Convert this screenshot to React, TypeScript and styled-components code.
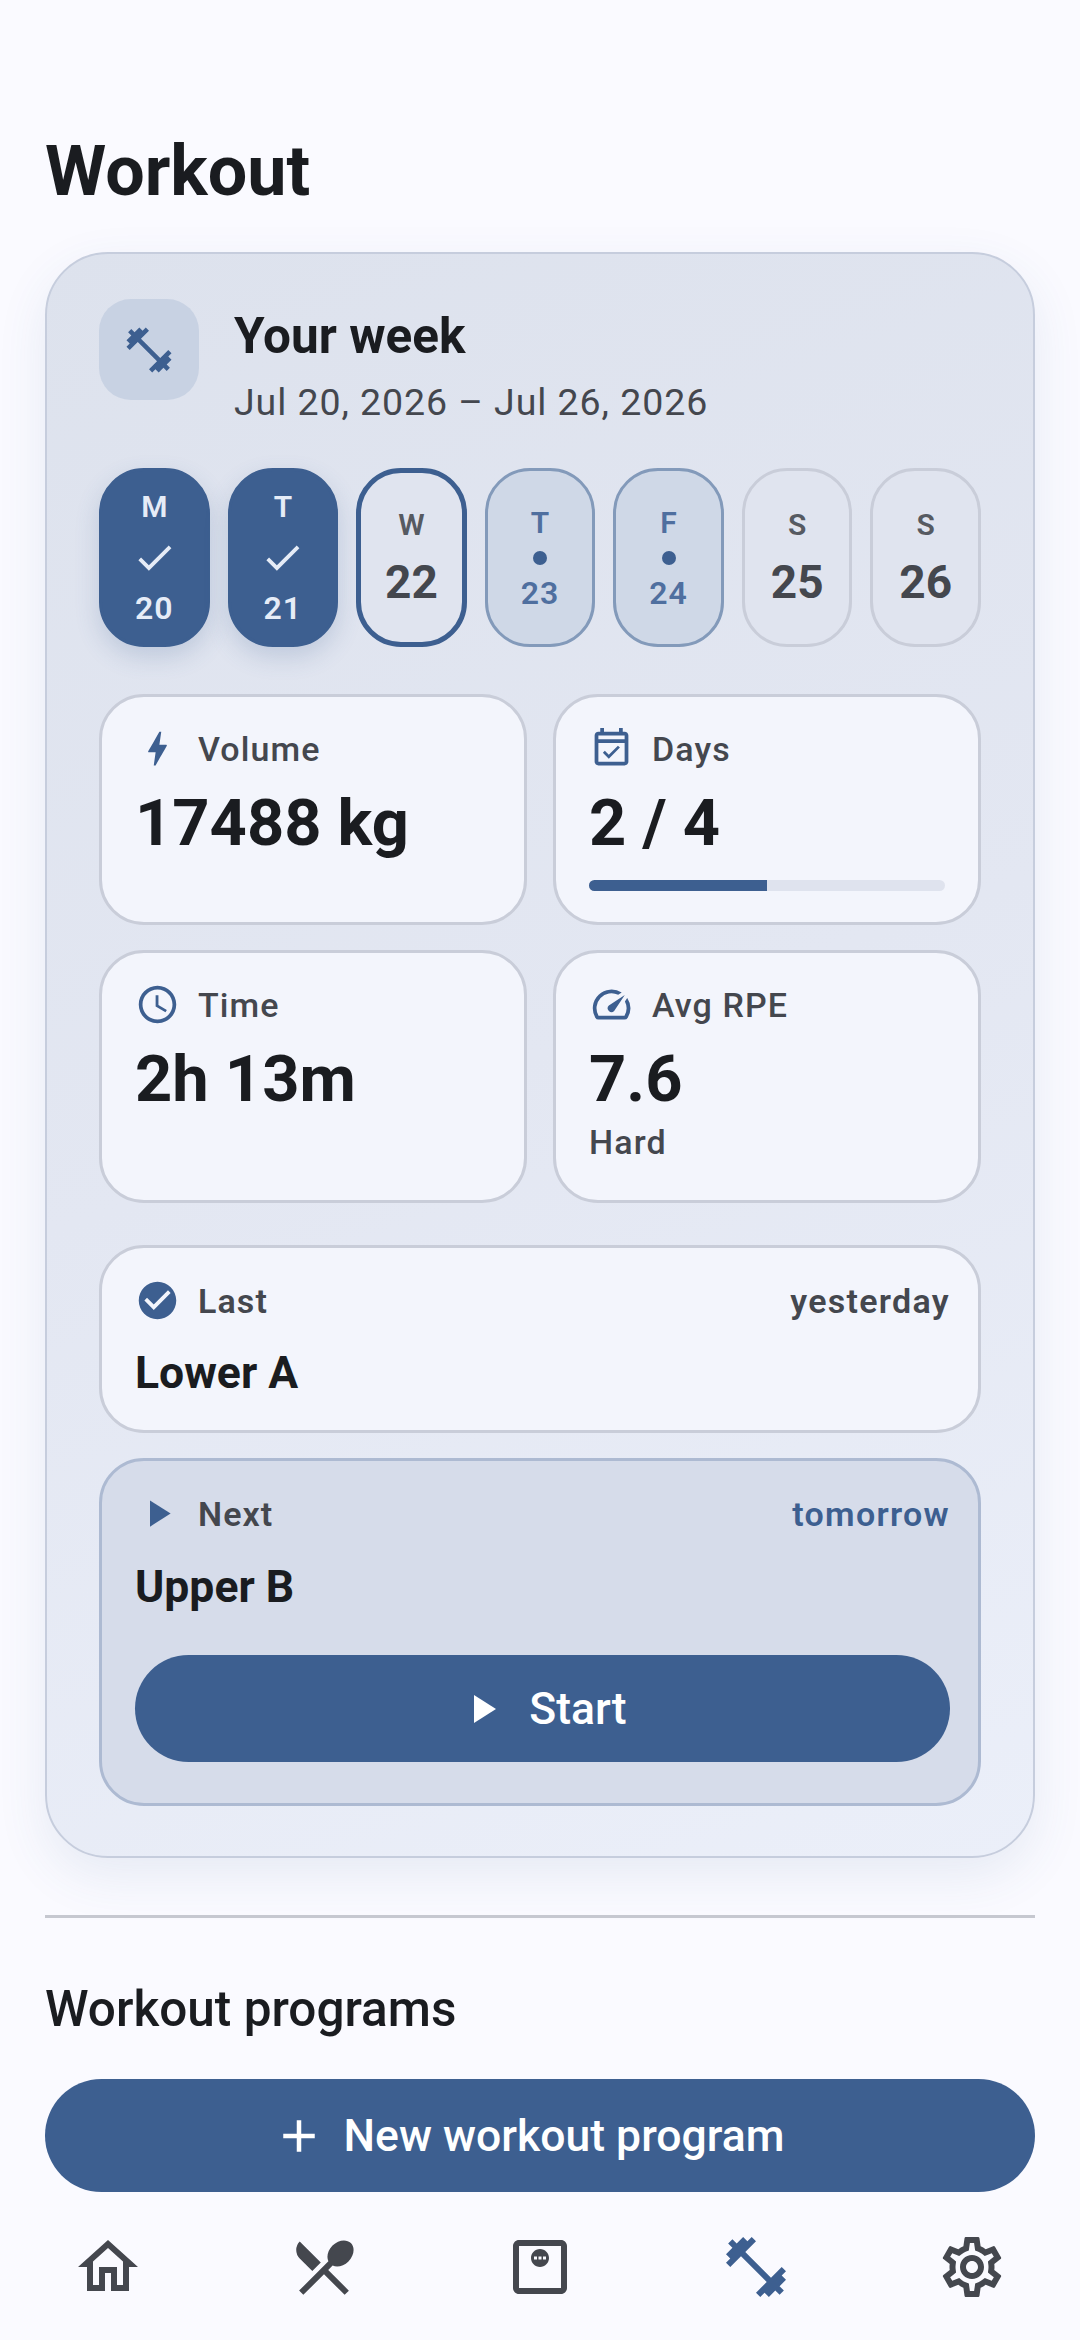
import { ReactNode } from "react";
import styled, { createGlobalStyle } from "styled-components";
import {
  MdAdd,
  MdBolt,
  MdCheck,
  MdCheckCircle,
  MdFitnessCenter,
  MdOutlineEventAvailable,
  MdOutlineHome,
  MdOutlineMonitorWeight,
  MdOutlineSchedule,
  MdOutlineSettings,
  MdOutlineSpeed,
  MdPlayArrow,
  MdRestaurantMenu,
} from "react-icons/md";

const primary = "#3d5f90";
const ink = "#1a1c20";
const muted = "#44474e";

const GlobalStyle = createGlobalStyle`
  html, body {
    margin: 0;
    background: #fafaff;
  }
  * {
    box-sizing: border-box;
  }
  body {
    font-family: Roboto, "Noto Sans", sans-serif;
    color: ${ink};
  }
`;

const Screen = styled.div`
  width: 1080px;
  height: 2340px;
  display: flex;
  flex-direction: column;
  overflow: hidden;
  background: #fafaff;
`;

const Content = styled.main`
  flex: 1;
  min-height: 0;
  overflow: hidden;
  padding: 130px 45px 0;
`;

const PageTitle = styled.h1`
  margin: 0 0 40px;
  font-size: 70px;
  line-height: 82px;
  font-weight: 700;
`;

const WeekCard = styled.section`
  border: 2px solid #c6cddd;
  border-radius: 63px;
  padding: 45px 52px 50px;
  background: linear-gradient(160deg, #dde2ed 0%, #e3e7f2 50%, #ebeff9 100%);
  box-shadow: 0 18px 50px rgba(61, 95, 144, 0.1);
`;

const WeekHeader = styled.header`
  display: flex;
  align-items: flex-start;
  gap: 35px;
  margin-bottom: 43px;
`;

const WeekBadge = styled.div`
  width: 100px;
  height: 101px;
  flex: none;
  display: flex;
  align-items: center;
  justify-content: center;
  border-radius: 32px;
  background: #c8d2e3;
  color: ${primary};
`;

const WeekText = styled.div`
  padding-top: 10px;
`;

const WeekTitle = styled.h2`
  margin: 0 0 16px;
  font-size: 49.5px;
  line-height: 54px;
  font-weight: 700;
`;

const WeekRange = styled.div`
  font-size: 37.5px;
  line-height: 46px;
  letter-spacing: 0.93px;
  color: ${muted};
`;

const DayStrip = styled.div`
  display: grid;
  grid-template-columns: repeat(7, 1fr);
  gap: 18px;
  margin-bottom: 47px;
`;

type DayState = "done" | "today" | "planned" | "rest";

const DayCell = styled.div<{ $state: DayState }>`
  height: 179px;
  display: flex;
  flex-direction: column;
  align-items: center;
  justify-content: center;
  gap: ${(p) => (p.$state === "today" || p.$state === "rest" ? "13px" : "10px")};
  border-radius: 45px;
  border: ${(p) =>
    p.$state === "done"
      ? `3px solid ${primary}`
      : p.$state === "today"
        ? `5px solid ${primary}`
        : p.$state === "planned"
          ? "3px solid #839ABA"
          : "3px solid #c9cdd9"};
  background: ${(p) =>
    p.$state === "done" ? primary : p.$state === "planned" ? "#cfd8e7" : "#e0e4ef"};
  color: ${(p) =>
    p.$state === "done" ? "#e6ecf7" : p.$state === "planned" ? "#4f6f9f" : "#44474e"};
  box-shadow: ${(p) => (p.$state === "done" ? "0 10px 24px rgba(61, 95, 144, 0.2)" : "none")};
`;

const DayLetter = styled.span<{ $soft?: boolean }>`
  font-size: 30px;
  line-height: 36px;
  font-weight: 600;
  opacity: ${(p) => (p.$soft ? 0.88 : 1)};
`;

const DayNumber = styled.span<{ $large?: boolean }>`
  font-size: ${(p) => (p.$large ? "46px" : "32px")};
  line-height: ${(p) => (p.$large ? "52px" : "36px")};
  font-weight: ${(p) => (p.$large ? 700 : 600)};
  letter-spacing: ${(p) => (p.$large ? "0" : "1px")};
`;

const DayDot = styled.span`
  width: 14px;
  height: 14px;
  border-radius: 50%;
  background: ${primary};
`;

const StatGrid = styled.div`
  display: grid;
  grid-template-columns: 1fr 1fr;
  gap: 25px 26px;
  margin-bottom: 42px;
`;

const StatCard = styled.article`
  border: 3px solid #c9cdd9;
  border-radius: 45px;
  padding: 29px 33px 31px;
  background: #f3f5fc;
`;

const RowHead = styled.div`
  display: flex;
  align-items: center;
  gap: 18px;
  height: 45px;
  color: ${primary};
`;

const RowLabel = styled.span<{ $strong?: boolean }>`
  font-size: 34px;
  line-height: 40px;
  font-weight: ${(p) => (p.$strong ? 600 : 500)};
  letter-spacing: 1.1px;
  color: ${muted};
`;

const StatValue = styled.div`
  margin-top: 14px;
  font-size: 65px;
  line-height: 76px;
  font-weight: 700;
  color: ${ink};
`;

const StatNote = styled.div`
  margin-top: 5px;
  padding-bottom: 7px;
  font-size: 34px;
  line-height: 40px;
  letter-spacing: 1.1px;
  font-weight: 500;
  color: ${muted};
`;

const Track = styled.div`
  height: 11px;
  margin-top: 19px;
  border-radius: 6px;
  overflow: hidden;
  background: #dfe3ee;
`;

const TrackFill = styled.div`
  height: 100%;
  background: ${primary};
`;

const SessionCard = styled.article<{ $next?: boolean }>`
  border: 3px solid ${(p) => (p.$next ? "#adbad2" : "#c9cdd9")};
  border-radius: 45px;
  padding: 30px 28px ${(p) => (p.$next ? "41px" : "32px")} 33px;
  margin-bottom: ${(p) => (p.$next ? "0" : "25px")};
  background: ${(p) => (p.$next ? "#d6dcea" : "#f3f5fc")};
`;

const SessionTop = styled.div`
  display: flex;
  align-items: center;
  justify-content: space-between;
`;

const SessionWhen = styled.span<{ $accent?: boolean }>`
  font-size: 34px;
  line-height: 40px;
  font-weight: 600;
  letter-spacing: 1.3px;
  color: ${(p) => (p.$accent ? primary : muted)};
`;

const SessionName = styled.div<{ $next?: boolean }>`
  margin-top: ${(p) => (p.$next ? "26px" : "25px")};
  margin-bottom: ${(p) => (p.$next ? "43px" : "0")};
  font-size: 44.5px;
  line-height: 50px;
  font-weight: 700;
`;

const StartButton = styled.button`
  width: 100%;
  height: 107px;
  display: flex;
  align-items: center;
  justify-content: center;
  gap: 23px;
  border: none;
  border-radius: 60px;
  padding: 0;
  background: ${primary};
  color: #fff;
  font-family: inherit;
  font-size: 44.5px;
  font-weight: 500;
`;

const NewProgramButton = styled(StartButton)`
  height: 113px;
  gap: 18px;
  padding-right: 24px;
`;

const Divider = styled.hr`
  margin: 57px 0 62px;
  height: 3px;
  border: none;
  background: #c6c8d0;
`;

const SectionTitle = styled.h2`
  margin: 0 0 41px;
  font-size: 49.5px;
  line-height: 58px;
  font-weight: 500;
`;

const BottomNav = styled.nav`
  flex: none;
  height: 145px;
  display: grid;
  grid-template-columns: repeat(5, 1fr);
  padding-top: 36px;
  background: #fafaff;
`;

const NavItem = styled.div<{ $active?: boolean }>`
  display: flex;
  justify-content: center;
  color: ${(p) => (p.$active ? primary : muted)};
`;

const days: { letter: string; num: number; state: DayState }[] = [
  { letter: "M", num: 20, state: "done" },
  { letter: "T", num: 21, state: "done" },
  { letter: "W", num: 22, state: "today" },
  { letter: "T", num: 23, state: "planned" },
  { letter: "F", num: 24, state: "planned" },
  { letter: "S", num: 25, state: "rest" },
  { letter: "S", num: 26, state: "rest" },
];

function Day({ letter, num, state }: { letter: string; num: number; state: DayState }) {
  const large = state === "today" || state === "rest";
  return (
    <DayCell $state={state}>
      <DayLetter $soft={large}>{letter}</DayLetter>
      {state === "done" && <MdCheck size={45} />}
      {state === "planned" && <DayDot />}
      <DayNumber $large={large}>{num}</DayNumber>
    </DayCell>
  );
}

function Head({ icon, label, strong }: { icon: ReactNode; label: string; strong?: boolean }) {
  return (
    <RowHead>
      {icon}
      <RowLabel $strong={strong}>{label}</RowLabel>
    </RowHead>
  );
}

export default function App() {
  return (
    <Screen>
      <GlobalStyle />
      <Content>
        <PageTitle>Workout</PageTitle>
        <WeekCard>
          <WeekHeader>
            <WeekBadge>
              <MdFitnessCenter size={54} />
            </WeekBadge>
            <WeekText>
              <WeekTitle>Your week</WeekTitle>
              <WeekRange>Jul 20, 2026 – Jul 26, 2026</WeekRange>
            </WeekText>
          </WeekHeader>

          <DayStrip>
            {days.map((d) => (
              <Day key={d.num} {...d} />
            ))}
          </DayStrip>

          <StatGrid>
            <StatCard>
              <Head icon={<MdBolt size={45} />} label="Volume" />
              <StatValue>17488 kg</StatValue>
            </StatCard>
            <StatCard>
              <Head icon={<MdOutlineEventAvailable size={45} />} label="Days" />
              <StatValue>2 / 4</StatValue>
              <Track>
                <TrackFill style={{ width: `${(2 / 4) * 100}%` }} />
              </Track>
            </StatCard>
            <StatCard>
              <Head icon={<MdOutlineSchedule size={45} />} label="Time" />
              <StatValue>2h 13m</StatValue>
            </StatCard>
            <StatCard>
              <Head icon={<MdOutlineSpeed size={45} />} label="Avg RPE" />
              <StatValue>7.6</StatValue>
              <StatNote>Hard</StatNote>
            </StatCard>
          </StatGrid>

          <SessionCard>
            <SessionTop>
              <Head icon={<MdCheckCircle size={45} />} label="Last" strong />
              <SessionWhen>yesterday</SessionWhen>
            </SessionTop>
            <SessionName>Lower A</SessionName>
          </SessionCard>

          <SessionCard $next>
            <SessionTop>
              <Head icon={<MdPlayArrow size={45} />} label="Next" strong />
              <SessionWhen $accent>tomorrow</SessionWhen>
            </SessionTop>
            <SessionName $next>Upper B</SessionName>
            <StartButton>
              <MdPlayArrow size={48} />
              Start
            </StartButton>
          </SessionCard>
        </WeekCard>

        <Divider />
        <SectionTitle>Workout programs</SectionTitle>
        <NewProgramButton>
          <MdAdd size={54} />
          New workout program
        </NewProgramButton>
      </Content>

      <BottomNav>
        <NavItem>
          <MdOutlineHome size={72} />
        </NavItem>
        <NavItem>
          <MdRestaurantMenu size={72} />
        </NavItem>
        <NavItem>
          <MdOutlineMonitorWeight size={72} />
        </NavItem>
        <NavItem $active>
          <MdFitnessCenter size={72} />
        </NavItem>
        <NavItem>
          <MdOutlineSettings size={72} />
        </NavItem>
      </BottomNav>
    </Screen>
  );
}
